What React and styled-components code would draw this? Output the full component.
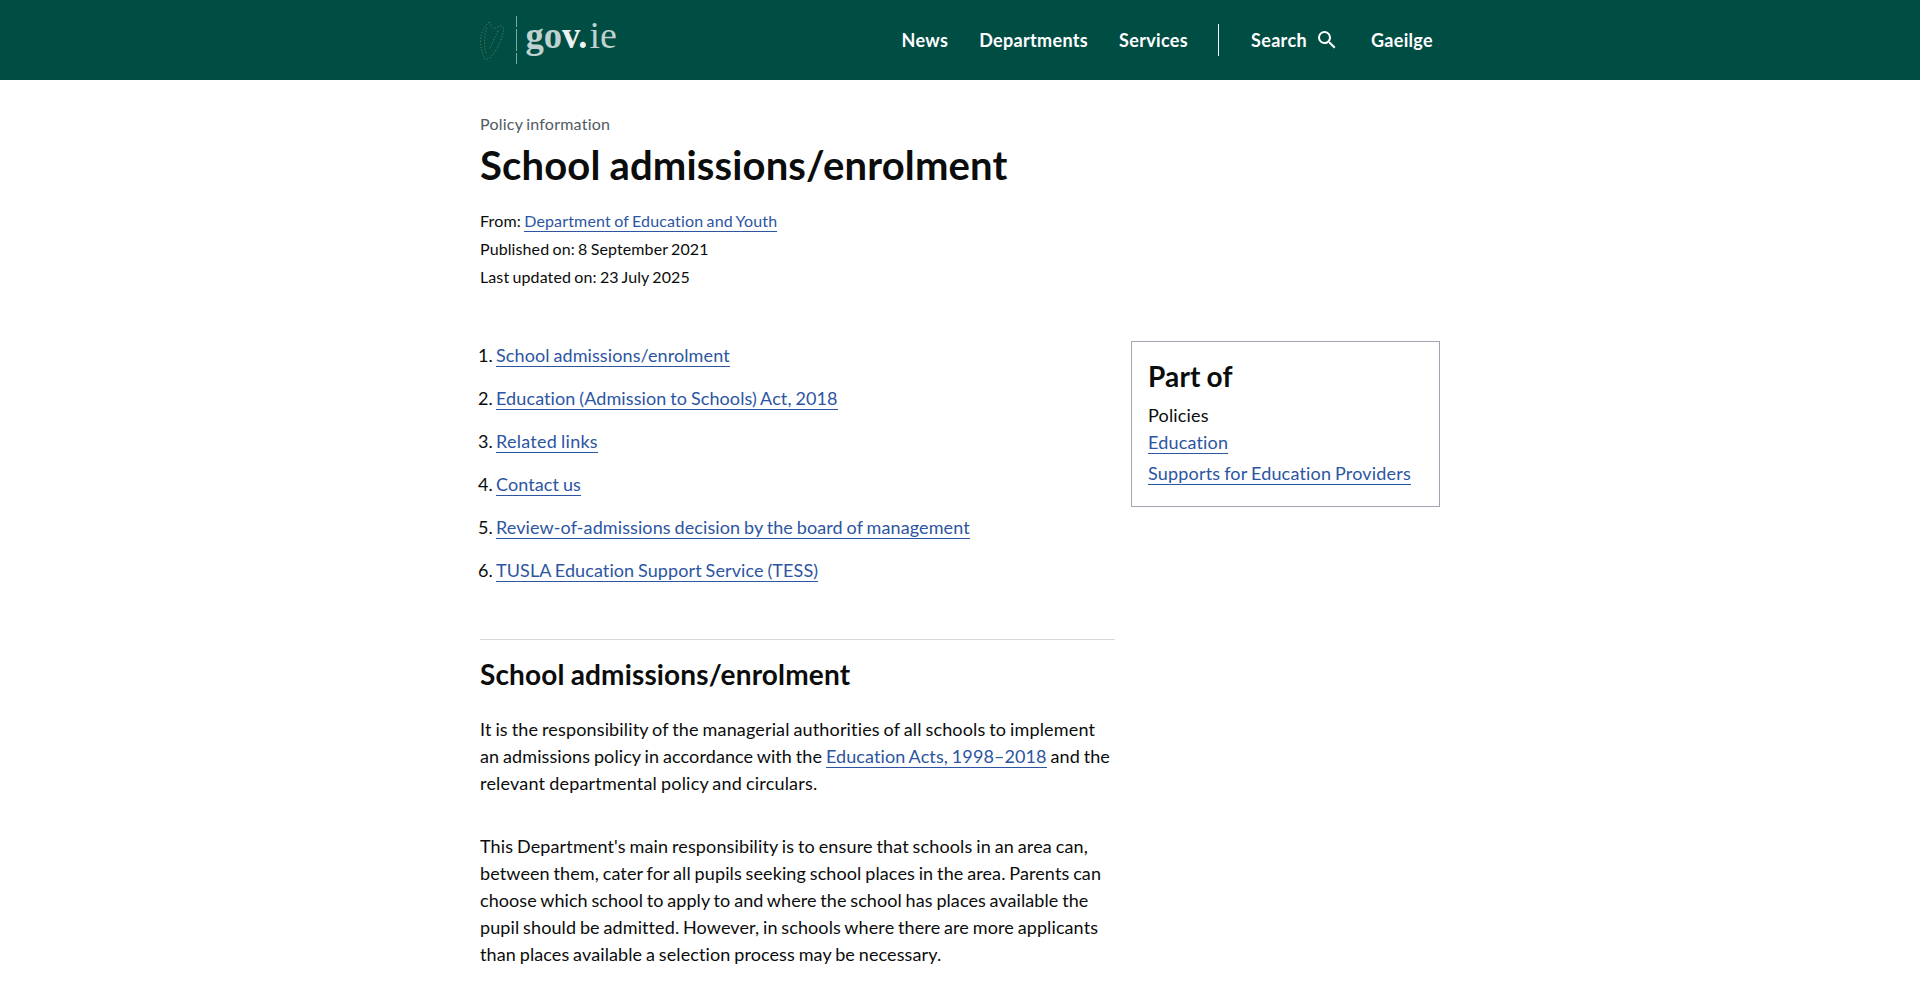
import React from "react";
import styled, { createGlobalStyle } from "styled-components";

const colors = {
  green: "#004d44",
  link: "#2c55a2",
  text: "#0b0c0c",
  grey: "#505a5f",
  boxBorder: "#a2a4b1",
  rule: "#d8d8d8",
};

const GlobalStyle = createGlobalStyle`
  * {
    box-sizing: border-box;
  }
  body {
    margin: 0;
    background: white;
    color: ${colors.text};
    font-family: Lato, "Liberation Sans", sans-serif;
    font-size: 18px;
    line-height: 27px;
    font-variant-ligatures: none;
    letter-spacing: 0.1px;
    word-spacing: -0.9px;
    overflow: hidden;
  }
`;

const Styled = {
  Header: styled.header`
    height: 80px;
    background: ${colors.green};
  `,
  Container: styled.div`
    width: 960px;
    margin: 0 auto;
  `,
  HeaderRow: styled.div`
    display: flex;
    justify-content: space-between;
    align-items: center;
    width: 960px;
    height: 80px;
    margin: 0 auto;
  `,
  Logo: styled.svg`
    display: block;
    width: 140px;
    height: 80px;
    letter-spacing: 0;
  `,
  Nav: styled.nav`
    display: flex;
    align-items: center;
    padding-right: 7px;
  `,
  NavLink: styled.a`
    display: flex;
    align-items: center;
    gap: 8px;
    margin-left: ${(props) => props.$gap || 31}px;
    color: white;
    font-weight: 700;
    letter-spacing: 0.33px;
    text-decoration: none;
  `,
  NavDivider: styled.span`
    width: 1px;
    height: 32px;
    margin-left: 30px;
    background: white;
  `,
  Kind: styled.p`
    margin: 32px 0 0;
    color: ${colors.grey};
    font-size: 16px;
    line-height: 24px;
    letter-spacing: 0.23px;
  `,
  Title: styled.h1`
    margin: 5px 0 18px;
    font-size: 40px;
    line-height: 48px;
    font-weight: 700;
    letter-spacing: 0.15px;
  `,
  Meta: styled.div`
    font-size: 16px;
    line-height: 28px;
    letter-spacing: ${(props) => props.$tracking || 0.1}px;
  `,
  Link: styled.a`
    padding-bottom: ${(props) => props.$drop || 0}px;
    color: ${colors.link};
    text-decoration: none;
    border-bottom: 1px solid ${colors.link};
  `,
  Columns: styled.div`
    display: grid;
    grid-template-columns: 635px 309px;
    column-gap: 16px;
    align-items: start;
    margin-top: 50px;
  `,
  Contents: styled.ol`
    display: flex;
    flex-direction: column;
    gap: 16px;
    margin: 0 0 55px;
    padding: 1px 0 0;
    list-style: none;
  `,
  ContentsItem: styled.li`
    letter-spacing: ${(props) => props.$tracking || 0.1}px;
  `,
  Number: styled.span`
    display: inline-block;
    width: 18px;
    margin-left: -2px;
    letter-spacing: 0;
  `,
  Rule: styled.hr`
    height: 1px;
    margin: 0;
    border: 0;
    background: ${colors.rule};
  `,
  Heading: styled.h2`
    margin: ${(props) => props.$margin || 0};
    font-size: 28px;
    line-height: 36px;
    font-weight: 700;
    letter-spacing: 0.15px;
  `,
  Paragraph: styled.p`
    margin: 0 0 36px;
  `,
  Line: styled.span`
    display: block;
    white-space: nowrap;
    letter-spacing: ${(props) => props.$tracking || 0.1}px;
  `,
  PartOf: styled.aside`
    height: 166px;
    padding: 16px;
    border: 1px solid ${colors.boxBorder};
    letter-spacing: 0.18px;
  `,
  PartOfLine: styled.div`
    margin-bottom: ${(props) => props.$gap || 0}px;
  `,
};

const contents = [
  { title: "School admissions/enrolment" },
  { title: "Education (Admission to Schools) Act, 2018" },
  { title: "Related links", tracking: 0.26 },
  { title: "Contact us" },
  { title: "Review-of-admissions decision by the board of management" },
  { title: "TUSLA Education Support Service (TESS)" },
];

const GovLogo = () => (
  <Styled.Logo viewBox="0 0 140 80">
    <g fill="none" stroke="#8a9a63" strokeWidth="0.9" strokeDasharray="1.2 1.8" opacity="0.65">
      <path d="M9 22 C5 26 1 32 0.5 40 C0.5 48 2 54 5 59" />
      <path d="M9 22 C12 27 14 30 18 27 C21 25 24 26 23.500 30 C22 40 17 50 10 58 L5 60" />
      <path d="M7 28 C4 35 4 44 6 54 M18 31 L9 50" />
    </g>
    <path d="M36.500 16V27M36.500 29V51M36.500 53V64" stroke="#7fa6a1" strokeWidth="1" />
    <g fill="#bfd2cf" fontFamily="Liberation Serif, serif" fontSize="38">
      <text x="45.500" y="48" fontWeight="700" textLength="62" lengthAdjust="spacingAndGlyphs">
        go<tspan fill="#edf3f2">v.</tspan>
      </text>
      <text x="109.500" y="48">ie</text>
    </g>
  </Styled.Logo>
);

const SearchIcon = () => (
  <svg width="24" height="24" viewBox="0 0 24 24" fill="white">
    <path d="M15.500 14h-.79l-.28-.27A6.471 6.471 0 0 0 16 9.500 6.500 6.500 0 1 0 9.500 16c1.610 0 3.090-.59 4.230-1.570l.27.28v.79l5 4.990L20.490 19l-4.990-5zm-6 0C7.010 14 5 11.990 5 9.500S7.010 5 9.500 5 14 7.010 14 9.500 11.990 14 9.500 14z" />
  </svg>
);

const App = () => {
  return (
    <>
      <GlobalStyle />
      <Styled.Header>
        <Styled.HeaderRow>
          <GovLogo />
          <Styled.Nav>
            <Styled.NavLink>News</Styled.NavLink>
            <Styled.NavLink>Departments</Styled.NavLink>
            <Styled.NavLink>Services</Styled.NavLink>
            <Styled.NavDivider />
            <Styled.NavLink $gap={32}>
              Search
              <SearchIcon />
            </Styled.NavLink>
            <Styled.NavLink $gap={32}>Gaeilge</Styled.NavLink>
          </Styled.Nav>
        </Styled.HeaderRow>
      </Styled.Header>
      <Styled.Container>
        <Styled.Kind>Policy information</Styled.Kind>
        <Styled.Title>School admissions/enrolment</Styled.Title>
        <Styled.Meta $tracking={0.15}>
          From: <Styled.Link $drop={1}>Department of Education and Youth</Styled.Link>
        </Styled.Meta>
        <Styled.Meta>Published on: 8 September 2021</Styled.Meta>
        <Styled.Meta>Last updated on: 23 July 2025</Styled.Meta>
        <Styled.Columns>
          <main>
            <Styled.Contents>
              {contents.map((item, index) => (
                <Styled.ContentsItem key={item.title} $tracking={item.tracking}>
                  <Styled.Number>{index + 1}.</Styled.Number>
                  <Styled.Link>{item.title}</Styled.Link>
                </Styled.ContentsItem>
              ))}
            </Styled.Contents>
            <Styled.Rule />
            <Styled.Heading $margin="16px 0 24px">School admissions/enrolment</Styled.Heading>
            <Styled.Paragraph>
              <Styled.Line $tracking={0.15}>
                It is the responsibility of the managerial authorities of all schools to implement
              </Styled.Line>
              <Styled.Line>
                an admissions policy in accordance with the{" "}
                <Styled.Link>Education Acts, 1998–2018</Styled.Link> and the
              </Styled.Line>
              <Styled.Line $tracking={0.2}>relevant departmental policy and circulars.</Styled.Line>
            </Styled.Paragraph>
            <Styled.Paragraph>
              <Styled.Line $tracking={0.13}>
                This Department's main responsibility is to ensure that schools in an area can,
              </Styled.Line>
              <Styled.Line>
                between them, cater for all pupils seeking school places in the area. Parents can
              </Styled.Line>
              <Styled.Line $tracking={0.07}>
                choose which school to apply to and where the school has places available the
              </Styled.Line>
              <Styled.Line>
                pupil should be admitted. However, in schools where there are more applicants
              </Styled.Line>
              <Styled.Line>than places available a selection process may be necessary.</Styled.Line>
            </Styled.Paragraph>
          </main>
          <Styled.PartOf>
            <Styled.Heading $margin="0 0 8px">Part of</Styled.Heading>
            <Styled.PartOfLine>Policies</Styled.PartOfLine>
            <Styled.PartOfLine $gap={4}>
              <Styled.Link>Education</Styled.Link>
            </Styled.PartOfLine>
            <Styled.PartOfLine>
              <Styled.Link>Supports for Education Providers</Styled.Link>
            </Styled.PartOfLine>
          </Styled.PartOf>
        </Styled.Columns>
      </Styled.Container>
    </>
  );
};

export default App;
